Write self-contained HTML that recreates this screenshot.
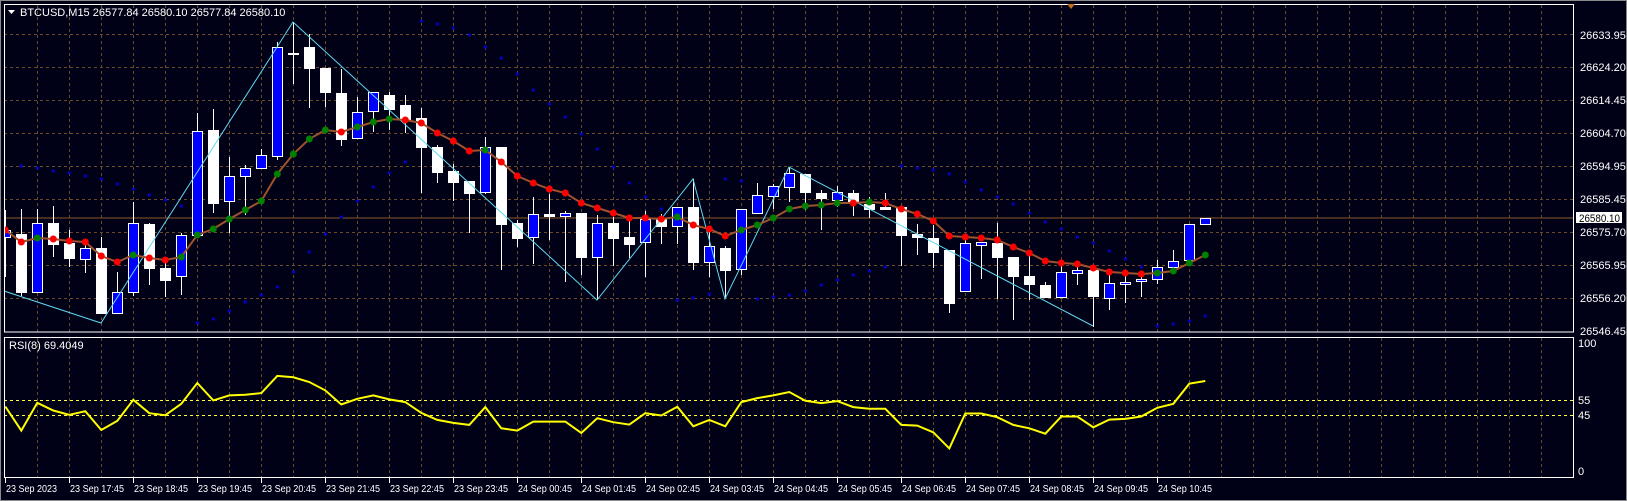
<!DOCTYPE html>
<html><head><meta charset="utf-8"><style>
html,body{margin:0;padding:0;background:#000016;}
body{width:1627px;height:501px;overflow:hidden;position:relative;}
svg{position:absolute;left:0;top:0;}
text{font-family:"Liberation Sans",sans-serif;font-size:11px;fill:#fff;}
#time text{font-size:10px;}
</style></head><body>
<svg id="s" width="1627" height="501" xmlns="http://www.w3.org/2000/svg">
<rect x="0" y="0" width="1627" height="501" fill="#000016"/>
<rect x="0.5" y="0.5" width="1626" height="500" fill="none" stroke="#8a8a8a"/>
<g id="grid"></g>
<line x1="4" y1="218" x2="1574" y2="218" stroke="#8b5a2b" stroke-width="1"/>
<g id="chart"></g>
<rect x="4.5" y="4.5" width="1569" height="327.5" fill="none" stroke="#fff" stroke-width="1"/>
<rect x="4.5" y="337.5" width="1569" height="140" fill="none" stroke="#fff" stroke-width="1"/>
<polygon points="1067,4 1075,4 1071,9" fill="#c07020"/>
<polygon points="8,10 15,10 11.5,14" fill="#fff"/>
<text x="20" y="16">BTCUSD,M15  26577.84 26580.10 26577.84 26580.10</text>
<text x="9" y="349">RSI(8) 69.4049</text>
<g>
<text x="1580" y="39">26633.95</text>
<text x="1580" y="71">26624.20</text>
<text x="1580" y="104">26614.45</text>
<text x="1580" y="137">26604.70</text>
<text x="1580" y="170">26594.95</text>
<text x="1580" y="203">26585.45</text>
<rect x="1576" y="212" width="46" height="11" fill="#fff"/>
<text x="1579" y="222" style="fill:#000" textLength="41" lengthAdjust="spacingAndGlyphs">26580.10</text>
<text x="1580" y="236">26575.70</text>
<text x="1580" y="269">26565.95</text>
<text x="1580" y="302">26556.20</text>
<text x="1580" y="335">26546.45</text>
<text x="1578" y="347">100</text>
<text x="1578" y="404">55</text>
<text x="1578" y="419">45</text>
<text x="1578" y="475">0</text>
</g>
<g id="time">
<text x="6" y="492" textLength="51" lengthAdjust="spacingAndGlyphs">23 Sep 2023</text>
<text x="70" y="492" textLength="54" lengthAdjust="spacingAndGlyphs">23 Sep 17:45</text>
<text x="134" y="492" textLength="54" lengthAdjust="spacingAndGlyphs">23 Sep 18:45</text>
<text x="198" y="492" textLength="54" lengthAdjust="spacingAndGlyphs">23 Sep 19:45</text>
<text x="262" y="492" textLength="54" lengthAdjust="spacingAndGlyphs">23 Sep 20:45</text>
<text x="326" y="492" textLength="54" lengthAdjust="spacingAndGlyphs">23 Sep 21:45</text>
<text x="390" y="492" textLength="54" lengthAdjust="spacingAndGlyphs">23 Sep 22:45</text>
<text x="454" y="492" textLength="54" lengthAdjust="spacingAndGlyphs">23 Sep 23:45</text>
<text x="518" y="492" textLength="54" lengthAdjust="spacingAndGlyphs">24 Sep 00:45</text>
<text x="582" y="492" textLength="54" lengthAdjust="spacingAndGlyphs">24 Sep 01:45</text>
<text x="646" y="492" textLength="54" lengthAdjust="spacingAndGlyphs">24 Sep 02:45</text>
<text x="710" y="492" textLength="54" lengthAdjust="spacingAndGlyphs">24 Sep 03:45</text>
<text x="774" y="492" textLength="54" lengthAdjust="spacingAndGlyphs">24 Sep 04:45</text>
<text x="838" y="492" textLength="54" lengthAdjust="spacingAndGlyphs">24 Sep 05:45</text>
<text x="902" y="492" textLength="54" lengthAdjust="spacingAndGlyphs">24 Sep 06:45</text>
<text x="966" y="492" textLength="54" lengthAdjust="spacingAndGlyphs">24 Sep 07:45</text>
<text x="1030" y="492" textLength="54" lengthAdjust="spacingAndGlyphs">24 Sep 08:45</text>
<text x="1094" y="492" textLength="54" lengthAdjust="spacingAndGlyphs">24 Sep 09:45</text>
<text x="1158" y="492" textLength="54" lengthAdjust="spacingAndGlyphs">24 Sep 10:45</text>
</g>
</svg>
<script>
var NS="http://www.w3.org/2000/svg";
function el(p,t,a){var e=document.createElementNS(NS,t);for(var k in a)e.setAttribute(k,a[k]);p.appendChild(e);return e;}
var g=document.getElementById('grid'),c=document.getElementById('chart');
var gs="#6e4a28";
[34,67,100,133,166,199,232,265,298].forEach(function(y){el(g,'line',{x1:4,y1:y+.5,x2:1574,y2:y+.5,stroke:gs,'stroke-dasharray':'3,3'});});
for(var x=37.3;x<1574;x+=32){var xx=Math.round(x)+.5;el(g,'line',{x1:xx,y1:5,x2:xx,y2:332,stroke:gs,'stroke-dasharray':'3,3'});el(g,'line',{x1:xx,y1:338,x2:xx,y2:477,stroke:gs,'stroke-dasharray':'3,3'});}
for(var i=0;i<19;i++){var tx=Math.round(5.3+64*i)+.5;el(g,'line',{x1:tx,y1:478,x2:tx,y2:483,stroke:'#fff'});}
[400.5,415.5].forEach(function(y){el(g,'line',{x1:4,y1:y,x2:1574,y2:y,stroke:'#ffff40','stroke-dasharray':'3,3'});});
var C=[['b',230,237,210,277],['w',234,292,209,296],['b',223,292,209,293],['w',223,244,206,257],['w',243,258,230,267],['b',248,259,240,273],['w',248,313,237,313],['b',292,313,272,313],['b',223,292,202,296],['w',224,268,223,285],['w',268,280,257,297],['b',235,276,233,295],['b',131,235,113,235],['w',130,203,109,213],['b',176,201,157,233],['b',168,176,165,215],['b',155,168,149,169],['b',47,156,42,160],['w',53,54,22,84],['w',47,68,34,108],['w',68,92,68,107],['w',93,139,69,146],['b',112,138,97,138],['b',92,111,92,132],['w',95,109,92,130],['w',105,120,95,133],['w',118,147,108,193],['w',147,172,145,183],['w',171,182,164,201],['w',181,193,181,233],['b',147,192,137,194],['w',147,224,147,270],['w',223,238,220,247],['b',214,237,197,264],['w',214,216,194,240],['b',213,216,211,282],['w',213,257,213,275],['b',223,257,215,300],['w',223,238,217,266],['w',237,244,220,258],['b',219,242,211,277],['w',218,226,214,244],['b',207,226,207,244],['w',207,262,179,270],['b',246,262,227,277],['w',248,270,246,298],['b',209,269,209,275],['b',195,213,183,213],['b',186,196,184,209],['b',173,187,167,202],['w',174,192,174,210],['w',193,198,190,230],['b',192,200,186,207],['w',193,202,190,216],['w',204,209,197,218],['w',207,209,193,209],['w',207,235,207,266],['w',234,237,224,255],['w',238,252,225,268],['w',250,303,250,313],['b',243,291,240,291],['b',242,245,242,279],['w',243,257,223,299],['w',257,276,257,320],['w',276,284,256,300],['w',285,297,282,297],['b',272,297,265,297],['b',270,273,267,285],['w',270,296,270,327],['b',283,298,275,310],['b',282,284,275,303],['b',279,281,275,297],['b',267,279,260,284],['b',261,267,250,267],['b',224,260,224,260],['b',218,224,218,224]];
var cl=el(c,'g',{'clip-path':'url(#cp)'});
var defs=el(document.getElementById('s'),'defs',{});var cp=el(defs,'clipPath',{id:'cp'});el(cp,'rect',{x:5,y:5,width:1569,height:327});
var D={1:166,2:168,3:171,4:173,5:176,6:179,7:184,8:189,9:195,10:200,11:206,12:323,13:319,14:311,15:302,16:295,17:287,18:272,19:252,20:234,21:217,22:201,23:187,24:173,25:162,26:21,27:24,28:28,29:35,30:47,31:58,32:74,33:90,34:104,35:117,36:134,37:149,38:167,39:183,40:197,41:209,42:300,43:298,44:294,45:179,46:181,47:299,48:297,49:295,50:291,51:285,52:280,53:275,54:271,55:267,56:166,57:168,58:170,59:174,60:182,61:190,62:197,63:204,64:213,65:222,66:229,67:237,68:243,69:251,70:259,71:267,72:326,73:324,74:321,75:316};
for(var k in D){var x=5.3+16*k;el(cl,'rect',{x:x-1.5,y:D[k]-1.5,width:3,height:3,fill:'#0000c8'});}
C.forEach(function(d,k){var x=Math.round(5.3+16*k)+.5;
 el(cl,'line',{x1:x,y1:d[3],x2:x,y2:d[4],stroke:'#fff'});
 var h=Math.max(1,d[2]-d[1]);
 if(d[0]=='b')el(cl,'rect',{x:x-5,y:d[1]+.5,width:10,height:h,fill:'#0000ff',stroke:'#fff'});
 else el(cl,'rect',{x:x-5.5,y:d[1],width:11,height:h+1,fill:'#fff'});
});
el(cl,'polyline',{points:'4,291 101,323 293,22 597,300 693,179 725,299 789,167 1093,326',fill:'none',stroke:'#5fd8ee'});
var M=[230,242,238,239,241,242,256,262,255,258,260,257,235,229,219,210,201,174,154,139,130,132,127,122,119,120,123,133,141,151,150,162,176,183,189,193,203,208,213,218,218,219,217,225,229,236,230,225,218,209,206,205,203,203,202,203,209,214,221,236,237,238,240,247,253,261,263,264,268,272,273,274,273,271,263,255];
var pts=M.map(function(y,k){return (5.3+16*k)+','+y;}).join(' ');
el(cl,'polyline',{points:pts,fill:'none',stroke:'#a0522d','stroke-width':2});
M.forEach(function(y,k){var up=k>0&&y<M[k-1];el(cl,'circle',{cx:5.3+16*k,cy:y,r:3.5,fill:up?'#008000':'#ff0000'});});
var R1=[213,285,202,225,238,227,283,256,193,233,239,205,143,195,180,178,173,122,126,140,165,207,190,180,192,200,232,253,262,268,215,278,285,258,258,258,292,248];
var R2=[260,267,233,240,214,272,253,272,200,188,180,170,196,203,197,215,220,220,268,270,290,338,234,234,245,268,278,294,243,243,275,252,250,243,217,205,145,137];
var R=R1.concat(R2);
el(c,'polyline',{points:R.map(function(v,k){return (5.3+16*k)+','+(335+v/2.98).toFixed(1);}).join(' '),fill:'none',stroke:'#ffff00','stroke-width':2});
</script>
</body></html>
